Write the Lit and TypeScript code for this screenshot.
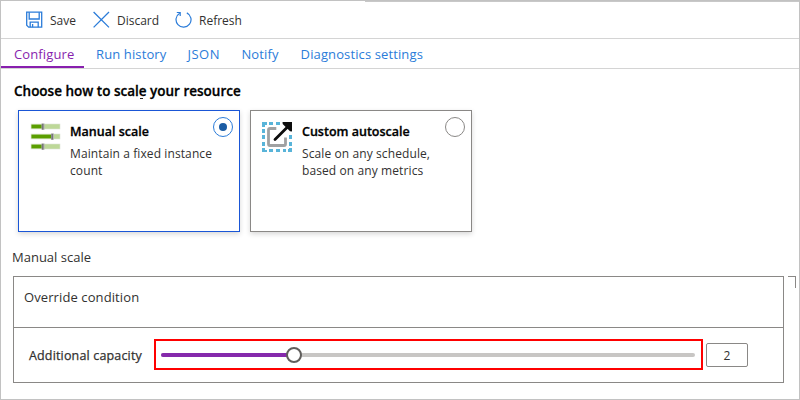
import { LitElement, html, css, svg } from "lit";
import { customElement, property, state } from "lit/decorators.js";
import { classMap } from "lit/directives/class-map.js";
import { styleMap } from "lit/directives/style-map.js";

const saveIcon = html`<svg width="18" height="18" viewBox="0 0 18 18" fill="none" stroke="#2b7cd9" stroke-width="1.3">
  <path d="M0.7 1.2H15.7V16.2H2.6L0.7 14.3Z" />
  <path d="M3.2 1.2V8H13.2V1.2" />
  <path d="M4.2 16.2V11.2H12.2V16.2M6.6 13V16.2" />
</svg>`;

const discardIcon = html`<svg width="18" height="18" viewBox="0 0 18 18" fill="none" stroke="#2b7cd9" stroke-width="1.3">
  <path d="M0.6 1L16 16.4M16 1L0.6 16.4" />
</svg>`;

const refreshIcon = html`<svg width="18" height="18" viewBox="0 0 18 18" fill="none" stroke="#2b7cd9" stroke-width="1.2">
  <path d="M11.8 1.9A7.5 7.5 0 1 1 4.7 2.2" />
  <path d="M1.8 1.5H5.2V5" />
</svg>`;

const bars: [number, number][] = [[2, 11.5], [12, 21], [22, 11.5]];
const slidersIcon = html`<svg width="32" height="30" viewBox="0 0 32 30">
  ${bars.map(([y, x]) => svg`
    <rect x="1" y=${y} width="29" height="5" fill="#bdd898" />
    <rect x="1" y=${y} width="29" height="5" fill="none" stroke="#dde3d6" stroke-width=".6" />
    <rect x="1.5" y=${y + 0.7} width=${x - 1} height="3.6" fill="#5a9e00" />
    <rect x=${x} y=${y - 0.5} width="3" height="6.2" fill="#b5b5b5" />
    <rect x=${x + 0.4} y=${y - 0.2} width="1.6" height="5.8" fill="#767676" />`)}
</svg>`;

const expandIcon = html`<svg width="32" height="32" viewBox="0 0 32 32">
  <path d="M0 0H5V3H3V5H0ZM7 0H11V3H7ZM14 0H18V3H14ZM0 7H3V11H0ZM0 13H3V17H0ZM0 20H3V24H0ZM0 26H3V28H5V30H0ZM7 27H11V30H7ZM14 27H18V30H14ZM21 27H24V30H21ZM26 27H27V26H30V30H26ZM27 20H30V24H27ZM27 13H30V17H27Z" fill="#59b4d9" />
  <path d="M14.3 6.5H8Q6.5 6.5 6.5 8V22Q6.5 23.5 8 23.5H22Q23.5 23.5 23.5 22V15.6" fill="none" stroke="#a0a1a2" stroke-width="2.8" />
  <path d="M13 17.5L26 4.5" stroke="#0d0d0d" stroke-width="2.8" stroke-linecap="round" />
  <path d="M20.5 0H30V9.5L28 9.3L20.7 2Z" fill="#0d0d0d" />
</svg>`;

@customElement("scale-card")
export class ScaleCard extends LitElement {
  @property() heading = "";
  @property() description = "";
  @property({ type: Boolean }) selected = false;
  @property({ attribute: false }) icon: unknown;

  static styles = css`
    :host { display: block; width: 222px; height: 122px; }
    .card {
      box-sizing: border-box; height: 100%; display: flex; align-items: flex-start;
      padding: 11px 6px 0 11px; background: #fff; border: 1px solid #8a8886;
      box-shadow: 0 2px 5px rgba(0, 0, 0, .16);
    }
    .card.selected { border-color: #1a56d6; }
    .icon { flex: 0 0 32px; height: 32px; }
    .icon svg { display: block; }
    .text { flex: 1; margin: 1px -24px 0 8px; color: #000; }
    .title { font-size: 12.5px; font-weight: 600; line-height: 17px; -webkit-text-stroke: .3px #000; }
    .description { font-size: 12px; line-height: 17px; margin-top: 5px; letter-spacing: .1px; color: #323130; white-space: pre-line; }
    .radio {
      flex: none; box-sizing: border-box; width: 20px; height: 20px; margin-top: -5px;
      border: 1px solid #8a8886; border-radius: 50%;
      display: flex; align-items: center; justify-content: center;
    }
    .selected .radio { border-color: #2b7cd9; }
    .dot { width: 8px; height: 8px; border-radius: 50%; background: #1b5ca4; }
  `;

  render() {
    return html`<div class=${classMap({ card: true, selected: this.selected })}>
      <div class="icon">${this.icon}</div>
      <div class="text">
        <div class="title">${this.heading}</div>
        <div class="description">${this.description}</div>
      </div>
      <div class="radio">${this.selected ? html`<div class="dot"></div>` : null}</div>
    </div>`;
  }
}

@customElement("capacity-slider")
export class CapacitySlider extends LitElement {
  @property({ type: Number }) percent = 0;

  static styles = css`
    :host { display: block; }
    .track { position: relative; height: 4px; border-radius: 2px; background: #c8c6c4; }
    .fill { height: 4px; border-radius: 2px; background: #8529ab; }
    .thumb {
      position: absolute; top: 50%; transform: translate(-50%, -50%); box-sizing: border-box;
      width: 16px; height: 16px; border: 2px solid #605e5c; border-radius: 50%; background: #fff;
    }
  `;

  render() {
    return html`<div class="track">
      <div class="fill" style=${styleMap({ width: `${this.percent}%` })}></div>
      <div class="thumb" style=${styleMap({ left: `${this.percent}%` })}></div>
    </div>`;
  }
}

@customElement("app-root")
export class AppRoot extends LitElement {
  @state() private tab = "Configure";

  static styles = css`
    :host {
      display: block; width: 800px; height: 400px;
      font-family: "Open Sans", "Noto Sans", sans-serif; color: #323130;
    }
    .frame { position: relative; box-sizing: border-box; height: 400px; border: 1px solid #c2c2c2; background: #fff; overflow: hidden; }
    .edge { position: absolute; top: 0; left: 364px; right: 0; height: 1px; background: #c8c8c8; }
    .mark { position: absolute; top: 97px; left: 139px; width: 3px; height: 1px; background: #222; }
    .toolbar { box-sizing: border-box; height: 38px; display: flex; align-items: center; padding-left: 25px; border-bottom: 1px solid #d4d4d4; }
    .command { display: flex; align-items: center; font-size: 12px; line-height: 18px; }
    .command svg { display: block; margin-right: 6px; }
    .command span { padding-top: 2px; }
    .save { width: 67px; }
    .discard { width: 82px; }
    .tabs { box-sizing: border-box; height: 30px; display: flex; border-bottom: 1px solid #d4d4d4; font-size: 13px; line-height: 30px; letter-spacing: .12px; color: #2b7cd9; }
    .tab { box-sizing: border-box; height: 29px; padding: 0 9px 0 13px; white-space: nowrap; }
    .tab.active { width: 83px; padding-right: 0; margin-right: -1px; color: #881fae; border-bottom: 2px solid #881fae; }
    .tab.json { letter-spacing: .5px; padding: 0 8.5px 0 12px; }
    .heading { margin: 13px 0 0 13px; font-size: 13.5px; font-weight: 600; line-height: 18px; color: #000; -webkit-text-stroke: .3px #000; }
    .cards { display: flex; gap: 10px; margin: 10px 0 0 17px; }
    .section { margin: 16px 0 0 11px; font-size: 13px; line-height: 18px; }
    .columns { display: flex; align-items: flex-start; margin: 10px 0 0 12px; }
    .panel { box-sizing: border-box; width: 771px; height: 107px; border: 1px solid #8a8886; }
    .corner { box-sizing: border-box; width: 8px; height: 12px; margin-left: 4px; border: 1px solid #8a8886; border-width: 1px 1px 0 0; }
    .condition { box-sizing: border-box; height: 51px; padding-left: 10px; border-bottom: 1px solid #8a8886; font-size: 13px; line-height: 41px; letter-spacing: .1px; }
    .capacity { box-sizing: border-box; height: 54px; display: flex; align-items: center; padding-left: 15px; }
    .label { width: 125px; font-size: 12.5px; letter-spacing: .16px; -webkit-text-stroke: .25px #323130; white-space: nowrap; }
    .highlight { box-sizing: border-box; width: 549px; height: 31px; margin-bottom: 1px; border: 2px solid #f00; display: flex; align-items: flex-start; }
    .highlight capacity-slider { flex: 1; margin: 12px 6px 0 5px; }
    .amount { box-sizing: border-box; width: 42px; height: 24px; margin-left: 3px; border: 1px solid #8a8886; border-radius: 2px; font-size: 12px; line-height: 24px; text-align: center; }
  `;

  render() {
    const tabs = ["Configure", "Run history", "JSON", "Notify", "Diagnostics settings"];
    return html`<div class="frame">
      <div class="edge"></div>
      <div class="mark"></div>
      <div class="toolbar">
        <div class="command save">${saveIcon}<span>Save</span></div>
        <div class="command discard">${discardIcon}<span>Discard</span></div>
        <div class="command">${refreshIcon}<span>Refresh</span></div>
      </div>
      <div class="tabs">
        ${tabs.map((t) => html`<div class=${classMap({ tab: true, active: t === this.tab, json: t === "JSON" })} @click=${() => (this.tab = t)}>${t}</div>`)}
      </div>
      <div class="heading">Choose how to scale your resource</div>
      <div class="cards">
        <scale-card selected heading="Manual scale" description=${"Maintain a fixed instance\ncount"} .icon=${slidersIcon}></scale-card>
        <scale-card heading="Custom autoscale" description=${"Scale on any schedule,\nbased on any metrics"} .icon=${expandIcon}></scale-card>
      </div>
      <div class="section">Manual scale</div>
      <div class="columns">
        <div class="panel">
          <div class="condition">Override condition</div>
          <div class="capacity">
            <div class="label">Additional capacity</div>
            <div class="highlight"><capacity-slider percent="24.9"></capacity-slider></div>
            <div class="amount">2</div>
          </div>
        </div>
        <div class="corner"></div>
      </div>
    </div>`;
  }
}
